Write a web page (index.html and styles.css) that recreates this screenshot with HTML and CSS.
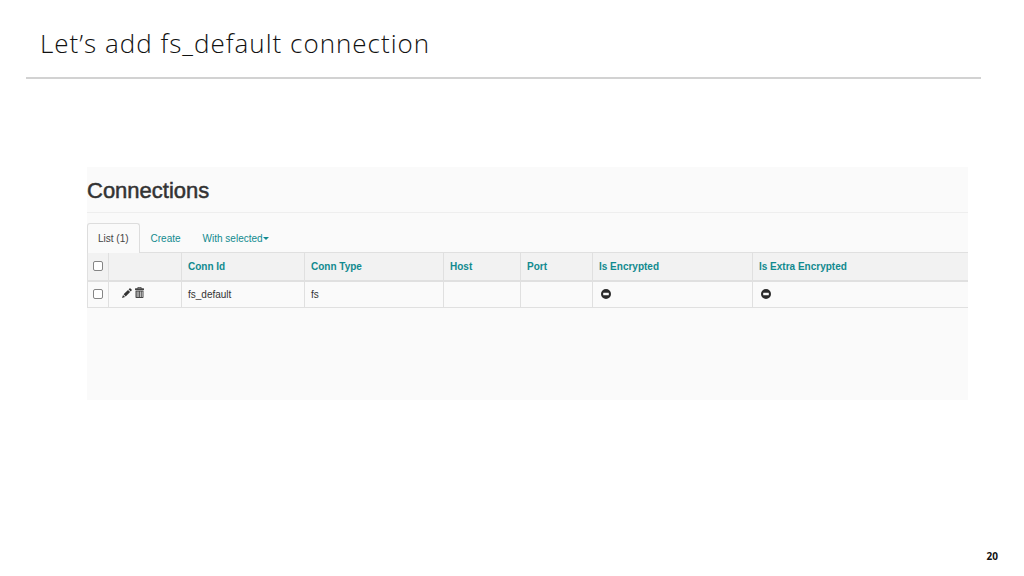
FILE: index.html
```
<!DOCTYPE html>
<html lang="en">
<head>
<meta charset="utf-8">
<meta name="viewport" content="width=device-width, initial-scale=1">
<title>Let’s add fs_default connection</title>
<link rel="stylesheet" href="styles.css">
</head>
<body class="slide">
<svg class="sprite" aria-hidden="true">
  <symbol id="minus" viewBox="0 0 20 20"><path fill-rule="evenodd" d="M10 0a10 10 0 1 0 0 20a10 10 0 1 0 0-20zM5 7.500h10q.6 0 .6.600v3.800q0 .6-.6.600H5q-.6 0-.6-.6V8.100q0-.6.6-.6z"/></symbol>
  <symbol id="pencil" viewBox="0 0 20 20"><path d="M0 20l2-6.200 4.200 4.200zM3.200 12.600L12 3.800l4.200 4.200-8.800 8.800zM13.200 2.600L15 .8q1-.9 2 0l2.200 2.200q.9 1 0 2l-1.800 1.800z"/></symbol>
  <symbol id="trash" viewBox="0 0 18 22"><path fill-rule="evenodd" d="M6 0h6q1 0 1 1v1.500h4q1 0 1 1V6H0V3.500q0-1 1-1h4V1q0-1 1-1zM6.500 1.500v1h5v-1zM1 7h16v13.500q0 1.500-1.500 1.500h-13Q1 22 1 20.500zM3.500 9v11H5V9zM7 9v11h1.300V9zM10.200 9v11h1.300V9zM13.500 9v11H15V9z"/></symbol>
</svg>
<header class="slide-header">
  <h1 class="slide-title">Let’s add fs_default connection</h1>
</header>
<main class="panel">
  <h2 class="panel-title">Connections</h2>
  <nav class="tabs">
    <a class="tab tab-active" href="#list">List (1)</a>
    <a class="tab" href="#create">Create</a>
    <button class="tab tab-menu" type="button">With selected<span class="caret"></span></button>
  </nav>
  <table class="grid" id="list">
    <colgroup>
      <col class="col-check"><col class="col-actions"><col class="col-id"><col class="col-type"><col class="col-host"><col class="col-port"><col class="col-encrypted"><col>
    </colgroup>
    <thead>
      <tr>
        <th class="check-cell"><input class="check" type="checkbox" aria-label="Select all"></th>
        <th></th>
        <th><a href="#id">Conn Id</a></th>
        <th><a href="#type">Conn Type</a></th>
        <th><a href="#host">Host</a></th>
        <th><a href="#port">Port</a></th>
        <th><a href="#encrypted">Is Encrypted</a></th>
        <th><a href="#extra">Is Extra Encrypted</a></th>
      </tr>
    </thead>
    <tbody>
      <tr>
        <td class="check-cell"><input class="check" type="checkbox" aria-label="Select fs_default"></td>
        <td>
          <div class="actions">
            <button class="action" type="button" aria-label="Edit"><svg class="icon-pencil"><use href="#pencil"/></svg></button>
            <button class="action" type="button" aria-label="Delete"><svg class="icon-trash"><use href="#trash"/></svg></button>
          </div>
        </td>
        <td>fs_default</td>
        <td>fs</td>
        <td></td>
        <td></td>
        <td><svg class="icon-minus" role="img" aria-label="No"><use href="#minus"/></svg></td>
        <td><svg class="icon-minus" role="img" aria-label="No"><use href="#minus"/></svg></td>
      </tr>
    </tbody>
  </table>
</main>
<footer class="slide-footer">20</footer>
</body>
</html>
```
FILE: styles.css
```
* { box-sizing: border-box; }

.slide {
  display: flex;
  flex-direction: column;
  min-height: 100vh;
  margin: 0;
  background: #fff;
  font-family: "Liberation Sans", Arial, sans-serif;
  font-size: 10px;
  color: #333;
}

.sprite { position: absolute; width: 0; height: 0; }

.slide-header {
  margin: 0 43px 0 26px;
  padding: 27px 15px 18px 14px;
  border-bottom: 2px solid #d2d2d2;
}

.slide-title {
  margin: 0;
  font-family: "Open Sans", "Noto Sans", sans-serif;
  font-size: 26px;
  font-weight: 300;
  line-height: 32px;
  letter-spacing: 1px;
  color: #111;
}

.panel {
  margin: 88px 56px 0 87px;
  padding-bottom: 92px;
  background: #fafafa;
}

.panel-title {
  margin: 0 0 10px;
  padding: 12px 0 9px;
  border-bottom: 1px solid #eee;
  font-size: 22px;
  font-weight: 500;
  line-height: 24px;
  -webkit-text-stroke: 0.5px #333;
}

/* The active tab overlaps the table's top border. */
.tabs {
  position: relative;
  display: flex;
  margin-bottom: -1px;
}

.tab {
  padding: 0 10px;
  border: 1px solid transparent;
  border-bottom: 0;
  border-radius: 3px 3px 0 0;
  background: none;
  font: inherit;
  line-height: 29px;
  color: #118a8f;
  text-decoration: none;
}

.tab-active {
  border-color: #ddd;
  background: #fafafa;
  color: #444;
}

.tab-menu {
  display: flex;
  align-items: center;
}

.caret {
  border: 3px solid transparent;
  border-top-color: currentColor;
  border-bottom: 0;
}

.grid {
  width: 100%;
  table-layout: fixed;
  border-collapse: collapse;
}

.col-check { width: 21px; }
.col-actions { width: 73px; }
.col-id { width: 123px; }
.col-type { width: 139px; }
.col-host { width: 77px; }
.col-port { width: 72px; }
.col-encrypted { width: 160px; }

.grid th,
.grid td {
  height: 27px;
  padding: 0 6px;
  border: 1px solid #e0e0e0;
  border-right: 0;
  text-align: left;
  vertical-align: middle;
}

.grid th {
  height: 28px;
  border-bottom: 2px solid #e0e0e0;
  background: #f2f2f2;
}

.grid a {
  color: #118a8f;
  text-decoration: none;
}

.grid .check-cell { padding: 0 5px; }

.check {
  display: block;
  appearance: none;
  width: 10px;
  height: 10px;
  margin: 0;
  border: 1px solid #858585;
  border-radius: 2px;
  background: #fff;
}

.check:checked { background: #118a8f; }

.actions {
  display: flex;
  align-items: center;
  gap: 3px;
  padding: 0 0 3px 7px;
}

.action {
  display: flex;
  padding: 0;
  border: 0;
  background: none;
}

.icon-pencil { width: 10px; height: 10px; fill: #333; }
.icon-trash { width: 9px; height: 11px; fill: #444; }

.icon-minus {
  display: block;
  width: 10px;
  height: 10px;
  margin-left: 2px;
  fill: #2b2b2b;
}

.slide-footer {
  margin-top: auto;
  padding: 0 26px 12px;
  font-family: "Open Sans", "Noto Sans", sans-serif;
  font-size: 10px;
  font-weight: 700;
  line-height: 16px;
  text-align: right;
  color: #111;
}
```
